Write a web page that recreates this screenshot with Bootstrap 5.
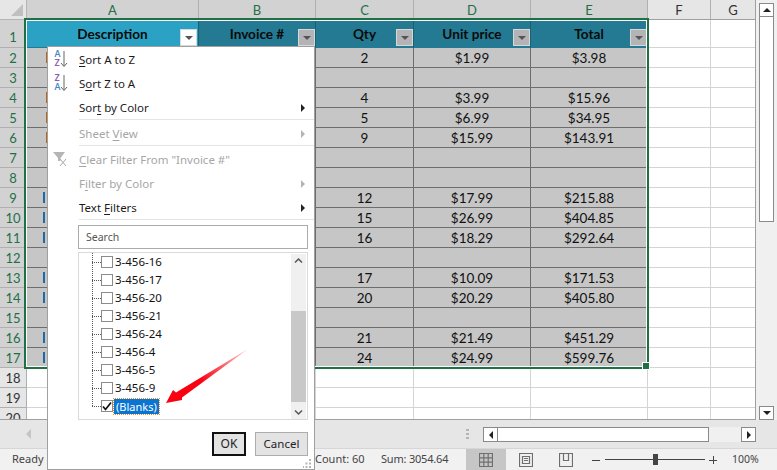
<!DOCTYPE html>
<html lang="en">
<head>
  <meta charset="UTF-8" />
  <title>Filter menu</title>
  <link href="https://cdn.jsdelivr.net/npm/bootstrap@5.3.3/dist/css/bootstrap.min.css" rel="stylesheet">
  <style>
    html, body { height: 470px; overflow: hidden; }
    body { position: relative; width: 777px; background: #e6e6e6; font-family: "Noto Sans", sans-serif; font-size: 11.5px; color: #222; }
    .xl-top { height: 420px; }
    .xl-sheet { display: grid; width: 756px; height: 420px; overflow: hidden; position: relative; background: #fff; border-right: 1px solid #9f9f9f; border-bottom: 1px solid #9f9f9f;
      grid-template-columns: 27px 172px 117px 98px 117px 117px 63px 45px;
      grid-template-rows: 20px 28px repeat(19, 20px); font-family: Lato, sans-serif; font-size: 13px; }
    .xl-corner { background: #e6e6e6; border-right: 1px solid #b5b5b5; border-bottom: 1px solid #b5b5b5; position: relative; }
    .xl-corner::after { content: ""; position: absolute; right: 3px; bottom: 3px; border-style: solid; border-width: 0 0 12px 12px; border-color: transparent transparent #c0c0c0 transparent; }
    .xl-colhead, .xl-rowhead { display: flex; align-items: center; justify-content: center; background: #d2d2d2; color: #1f6f47; border-right: 1px solid #b0b0b0; font-size: 13px; }
    .xl-colhead { border-bottom: 1px solid #9f9f9f; padding-top: 2px; }
    .xl-rowhead { border-bottom: 1px solid #b0b0b0; padding-top: 2px; }
    .xl-rowhead.xl-r1 { align-items: flex-end; padding-bottom: 0; }
    .xl-off { background: #e6e6e6; color: #333; }
    .xl-cell { display: flex; align-items: center; justify-content: center; background: #c6c6c6; color: #111; border-right: 1px solid #6d6d6d; border-bottom: 1px solid #6d6d6d; font-size: 13.5px; padding-top: 2px; }
    .xl-title { position: relative; background: #237a92; color: #0a0a0a; font-weight: 700; font-size: 13.6px; border-bottom: 1px solid #237a92; border-right: 1px solid #1b5f72; padding-top: 1px; padding-bottom: 0; }
    .xl-title-a { background: #2ba2c3; }
    .xl-filter { position: absolute; right: 0; bottom: 1px; width: 17px; height: 17px; background: #b4b4b6; border: 1px solid #d8d8d8; display: flex; align-items: center; justify-content: center; }
    .xl-title-a .xl-filter { background: #fff; right: 1px; }
    .xl-filter::after { content: ""; border-style: solid; border-width: 4px 4px 0; border-color: #555 transparent transparent; }
    .xl-bar { height: 11px; position: absolute; top: 4px; }
    .xl-empty { background: #fff; border-right: 1px solid #d4d4d4; border-bottom: 1px solid #d4d4d4; }
    .xl-a { position: relative; }
    .xl-select { position: absolute; left: 24px; top: 18px; width: 625px; height: 351px; border: 2px solid #1f7145; }
    .xl-select::before { content: ""; position: absolute; inset: 0; border: 1px solid #fff; }
    .xl-handle { position: absolute; right: -3px; bottom: -3px; width: 6px; height: 6px; background: #1f7145; border: 1px solid #fff; box-sizing: content-box; }
    .xl-vscroll { width: 21px; background: #f0f0f0; padding: 3px 3px 0; position: relative; }
    .xl-sbtn { background: #fff; border: 1px solid #8a8a8a; display: flex; align-items: center; justify-content: center; }
    .xl-vbtn { width: 15px; height: 14px; }
    .xl-up::after { content: ""; border-style: solid; border-width: 0 4px 4px; border-color: transparent transparent #222; }
    .xl-dn::after { content: ""; border-style: solid; border-width: 4px 4px 0; border-color: #222 transparent transparent; }
    .xl-lt::after { content: ""; border-style: solid; border-width: 4px 4px 4px 0; border-color: transparent #222 transparent transparent; }
    .xl-rt::after { content: ""; border-style: solid; border-width: 4px 0 4px 4px; border-color: transparent transparent transparent #222; }
    .xl-vthumb { width: 15px; height: 205px; background: #fff; border: 1px solid #8a8a8a; border-top: 0; }
    .xl-vdown { position: absolute; left: 3px; bottom: 0; }
    .xl-hbar { height: 28px; background: #e6e6e6; padding: 7px 21px 0 0; }
    .xl-tabarrow { margin-left: 26px; margin-top: 2px; border-style: solid; border-width: 5px 5px 5px 0; border-color: transparent #c4c4c4 transparent transparent; }
    .xl-grip { margin-left: auto; width: 3px; height: 11px; margin-right: 14px; margin-top: 2px; background: repeating-linear-gradient(#b5b5b5 0 2px, transparent 2px 4px); }
    .xl-htrack { width: 273px; height: 15px; background: #f0f0f0; }
    .xl-hbtn { width: 15px; height: 15px; }
    .xl-hthumb { width: 211px; height: 15px; background: #fff; border: 1px solid #8a8a8a; border-left: 0; }
    .xl-status { height: 22px; background: #f1f1f1; border-top: 1px solid #d6d6d6; color: #444; font-size: 11px; }
    .xl-ready { margin-left: 12px; width: 303px; }
    .xl-count { width: 66px; }
    .xl-sum { width: 85px; letter-spacing: -.2px; }
    .xl-view { width: 40px; height: 21px; display: flex; align-items: center; justify-content: center; }
    .xl-view-on { background: #c6c6c6; }
    .xl-zoom { margin-left: 6px; }
    .xl-slider { width: 100px; height: 1px; background: #444; position: relative; margin: 0 4px 0 5px; }
    .xl-slider::after { content: ""; position: absolute; left: 48px; top: -5px; width: 5px; height: 11px; background: #444; }
    .xl-pct { margin-left: 15px; font-size: 10.5px; }
    .xl-menu { position: absolute; left: 47px; top: 46px; width: 268px; height: 424px; background: #fff; border: 1px solid #a0a0a0; }
    .xl-item { height: 24px; display: flex; align-items: center; padding-left: 31px; padding-right: 9px; position: relative; color: #1c1c1c; }
    .xl-item u { text-underline-offset: 2px; }
    .xl-item.xl-dis { color: #a6a6a6; }
    .xl-short { height: 23px; }
    .xl-first { margin-top: 1px; }
    .xl-aftersep { margin-top: 2px; }
    .xl-caret { margin-left: auto; border-style: solid; border-width: 4px 0 4px 4px; border-color: transparent transparent transparent #222; }
    .xl-dis .xl-caret { border-left-color: #b4b4b4; }
    .xl-ico { position: absolute; left: 5px; top: 2px; }
    .xl-sep { height: 1px; background: #e4e4e4; margin: 0 0 0 31px; }
    .xl-search { margin: 5px 6px 0 30px; height: 24px; border: 1px solid #ababab; padding: 1px 0 0 7px; display: flex; align-items: center; color: #555; font-size: 10.5px; }
    .xl-list { margin: 3px 6px 0 30px; height: 168px; border: 1px solid #d9d9d9; position: relative; overflow: hidden; }
    .xl-node { height: 18px; display: flex; align-items: center; padding-left: 22px; position: relative; color: #111; font-size: 11.5px; }
    .xl-node::before { content: ""; position: absolute; left: 13px; top: 9px; width: 9px; border-top: 1px dotted #555; }
    .xl-tree { position: absolute; left: 13px; top: 0; height: 153px; border-left: 1px dotted #555; }
    .xl-box { width: 12px; height: 12px; border: 1px solid #8b8b8b; background: #fff; margin-right: 2px; flex: none; position: relative; }
    .xl-box svg { position: absolute; left: 0; top: 0; }
    .xl-blank { background: #0a74d1; color: #fff; padding: 0 2px; margin-left: -1px; outline: 1px dotted #e08a2c; line-height: 15px; font-size: 11px; }
    .xl-lscroll { position: absolute; right: 1px; top: 1px; width: 15px; height: 165px; background: #f0f0f0; }
    .xl-lthumb { position: absolute; left: 0; top: 57px; width: 15px; height: 91px; background: #c8c8c8; }
    .xl-chev { position: absolute; left: 0; width: 15px; text-align: center; line-height: 1; }
    .xl-chev-t { top: 3px; }
    .xl-chev-b { bottom: 3px; }
    .xl-actions { margin: 12px 6px 0 0; gap: 9px; }
    .xl-btn { height: 24px; padding: 0; border-radius: 0; background: #e3e3e3; border: 1px solid #adadad; font-size: 11.5px; color: #222; line-height: 1; }
    .xl-ok { width: 34px; border: 2px solid #111; font-size: 12px; }
    .xl-cancel { width: 53px; }
    .xl-gripper { position: absolute; right: 2px; bottom: 1px; }
    .xl-arrow { position: absolute; left: 160px; top: 345px; pointer-events: none; }
  </style>
</head>
<body>
  <div class="xl-top d-flex">
    <div class="xl-sheet" id="sheet"></div>
    <div class="xl-vscroll">
      <div class="xl-sbtn xl-vbtn xl-up"></div>
      <div class="xl-vthumb"></div>
      <div class="xl-sbtn xl-vbtn xl-dn xl-vdown"></div>
    </div>
  </div>

  <div class="xl-hbar d-flex">
    <span class="xl-tabarrow align-self-start"></span>
    <span class="xl-grip"></span>
    <div class="xl-htrack d-flex">
      <div class="xl-sbtn xl-hbtn xl-lt"></div>
      <div class="xl-hthumb"></div>
      <div class="xl-sbtn xl-hbtn xl-rt ms-auto"></div>
    </div>
  </div>

  <div class="xl-status d-flex align-items-center">
    <span class="xl-ready">Ready</span>
    <span class="xl-count">Count: 60</span>
    <span class="xl-sum">Sum: 3054.64</span>
    <span class="xl-view xl-view-on">
      <svg width="14" height="14" fill="none" stroke="#6f6f6f" stroke-width="1.200"><path d="M.5.5h13v13H.5zM.5 4.800h13M.5 9.200h13M4.800.5v13M9.200.5v13"/></svg>
    </span>
    <span class="xl-view">
      <svg width="14" height="14" fill="none" stroke="#6f6f6f" stroke-width="1.200"><path d="M.5.5h13v13H.5zM3.500 3.500h7v7h-7zM5 5.500h4M5 7.500h4"/></svg>
    </span>
    <span class="xl-view">
      <svg width="14" height="14" fill="none" stroke="#6f6f6f" stroke-width="1.200"><path d="M.5.5h13v13H.5zM4.500.5v7h5V.5"/></svg>
    </span>
    <span class="xl-zoom d-flex align-items-center">
      <svg width="8" height="8" stroke="#444"><path d="M0 4.500h8"/></svg>
      <span class="xl-slider"></span>
      <svg width="8" height="8" stroke="#444"><path d="M0 4.500h8M4.500 0v8"/></svg>
      <span class="xl-pct">100%</span>
    </span>
  </div>

  <div class="xl-select"><span class="xl-handle"></span></div>

  <div class="xl-menu">
    <div class="xl-item xl-first">
      <svg class="xl-ico" width="20" height="20" viewBox="0 0 20 20">
        <text x="1.500" y="7" font-family="Lato, sans-serif" font-size="8.500" font-weight="700" fill="#3c86c9">A</text>
        <text x="1.500" y="15.500" font-family="Lato, sans-serif" font-size="8.500" font-weight="700" fill="#8c5fb0">Z</text>
        <path d="M11 1v15M8 13l3 3.500 3-3.500" fill="none" stroke="#666"/>
      </svg>
      <span><u>S</u>ort A to Z</span>
    </div>
    <div class="xl-item">
      <svg class="xl-ico" width="20" height="20" viewBox="0 0 20 20">
        <text x="1.500" y="7" font-family="Lato, sans-serif" font-size="8.500" font-weight="700" fill="#8c5fb0">Z</text>
        <text x="1.500" y="15.500" font-family="Lato, sans-serif" font-size="8.500" font-weight="700" fill="#3c86c9">A</text>
        <path d="M11 1v15M8 13l3 3.500 3-3.500" fill="none" stroke="#666"/>
      </svg>
      <span>S<u>o</u>rt Z to A</span>
    </div>
    <div class="xl-item xl-short"><span>Sor<u>t</u> by Color</span><span class="xl-caret"></span></div>
    <div class="xl-sep"></div>
    <div class="xl-item xl-short xl-dis xl-aftersep"><span>Sheet <u>V</u>iew</span><span class="xl-caret"></span></div>
    <div class="xl-sep"></div>
    <div class="xl-item xl-dis xl-aftersep">
      <svg class="xl-ico" width="20" height="20" viewBox="0 0 20 20">
        <path d="M0 2h12L7.500 8v3H5V8z" fill="#b5b5b5"/>
        <path d="M7 9l6 7M13 9l-6 7" stroke="#a9a9a9" fill="none"/>
      </svg>
      <span><u>C</u>lear Filter From "Invoice #"</span>
    </div>
    <div class="xl-item xl-dis"><span>F<u>i</u>lter by Color</span><span class="xl-caret"></span></div>
    <div class="xl-item xl-short"><span>Text <u>F</u>ilters</span><span class="xl-caret"></span></div>
    <div class="xl-sep"></div>
    <div class="xl-search">Search</div>
    <div class="xl-list">
      <span class="xl-tree"></span>
      <div id="nodes"></div>
      <div class="xl-node">
        <span class="xl-box"><svg width="10" height="10"><path d="M1 5.500l2.500 3 5.500-7" fill="none" stroke="#111" stroke-width="1.700"/></svg></span>
        <span class="xl-blank">(Blanks)</span>
      </div>
      <div class="xl-lscroll">
        <span class="xl-chev xl-chev-t"><svg class="d-block mx-auto" width="9" height="7" fill="none" stroke="#555" stroke-width="1.500"><path d="M1 5.500l3.500-3.500 3.500 3.500"/></svg></span>
        <span class="xl-lthumb"></span>
        <span class="xl-chev xl-chev-b"><svg class="d-block mx-auto" width="9" height="7" fill="none" stroke="#555" stroke-width="1.500"><path d="M1 1.500l3.500 3.500 3.500-3.500"/></svg></span>
      </div>
    </div>
    <div class="xl-actions d-flex justify-content-end">
      <button type="button" class="btn xl-btn xl-ok">OK</button>
      <button type="button" class="btn xl-btn xl-cancel">Cancel</button>
    </div>
    <svg class="xl-gripper" width="9" height="9" fill="#b5b5b5"><path d="M6 0h2v2H6zM6 3.500h2v2H6zM2.500 3.500h2v2h-2zM6 7h2v2H6zM2.500 7h2v2h-2zM-1 7h2v2h-2z"/></svg>
  </div>

  <svg class="xl-arrow" width="95" height="65" viewBox="0 0 95 65">
    <defs>
      <linearGradient id="arrowFade" gradientUnits="userSpaceOnUse" x1="40" y1="35" x2="88" y2="4">
        <stop offset="0" stop-color="#fb0011"/><stop offset="1" stop-color="#fb0011" stop-opacity=".2"/>
      </linearGradient>
    </defs>
    <path d="M6 58 L13 45 L16 47.500 L88 4 L22 52.500 L22 55 Z" fill="url(#arrowFade)"/>
  </svg>

  <script>
    const orange = '#b8661a', blue = '#1f6aa5';
    const rows = [
      ['2', '$1.99', '$3.98', orange],
      ['', '', '', ''],
      ['4', '$3.99', '$15.96', orange],
      ['5', '$6.99', '$34.95', orange],
      ['9', '$15.99', '$143.91', orange],
      ['', '', '', ''],
      ['', '', '', ''],
      ['12', '$17.99', '$215.88', blue],
      ['15', '$26.99', '$404.85', blue],
      ['16', '$18.29', '$292.64', blue],
      ['', '', '', ''],
      ['17', '$10.09', '$171.53', blue],
      ['20', '$20.29', '$405.80', blue],
      ['', '', '', ''],
      ['21', '$21.49', '$451.29', blue],
      ['24', '$24.99', '$599.76', blue]
    ];
    let html = '<div class="xl-corner"></div>';
    'ABCDE'.split('').forEach(c => { html += `<div class="xl-colhead">${c}</div>`; });
    'FG'.split('').forEach(c => { html += `<div class="xl-colhead xl-off">${c}</div>`; });
    html += '<div class="xl-rowhead xl-r1">1</div>';
    ['Description', 'Invoice #', 'Qty', 'Unit price', 'Total'].forEach((t, i) => {
      html += `<div class="xl-cell xl-title ${i === 0 ? 'xl-title-a' : ''}">${t}<span class="xl-filter"></span></div>`;
    });
    html += '<div class="xl-empty"></div><div class="xl-empty"></div>';
    rows.forEach((r, i) => {
      // the first letter of the description peeks out left of the menu
      const bar = r[3] ? `<span class="xl-bar" style="background:${r[3]};left:${r[3] === blue ? 16 : 19}px;width:2px"></span>` : '';
      html += `<div class="xl-rowhead">${i + 2}</div><div class="xl-cell xl-a">${bar}</div><div class="xl-cell"></div>`;
      html += `<div class="xl-cell">${r[0]}</div><div class="xl-cell">${r[1]}</div><div class="xl-cell">${r[2]}</div>`;
      html += '<div class="xl-empty"></div><div class="xl-empty"></div>';
    });
    [18, 19, 20].forEach(n => {
      html += `<div class="xl-rowhead xl-off">${n}</div>` + '<div class="xl-empty"></div>'.repeat(7);
    });
    document.getElementById('sheet').innerHTML = html;

    document.getElementById('nodes').innerHTML = ['16', '17', '20', '21', '24', '4', '5', '9']
      .map(n => `<div class="xl-node"><span class="xl-box"></span><span>3-456-${n}</span></div>`).join('');
  </script>
  <script src="https://cdn.jsdelivr.net/npm/bootstrap@5.3.3/dist/js/bootstrap.bundle.min.js"></script>
</body>
</html>
